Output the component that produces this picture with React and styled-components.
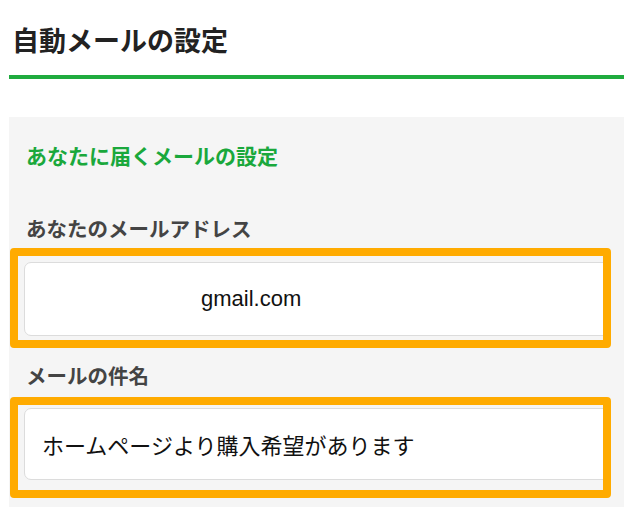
import React from "react";
import styled, { createGlobalStyle } from "styled-components";

const Global = createGlobalStyle`
  html, body { margin: 0; padding: 0; background: #ffffff; }
  body {
    font-family: "Liberation Sans", "Noto Sans CJK JP", sans-serif;
    color: #222;
  }
`;

const Page = styled.div`
  width: 615px;
  margin-left: 9px;
`;

const Header = styled.header`
  padding: 29px 0 19px 3px;
  border-bottom: 4px solid #1fab3e;
  margin-bottom: 38px;
`;

const Title = styled.h1`
  margin: 0;
  font-size: 27px;
  line-height: 27px;
  font-weight: 700;
  color: #222;
`;

const Panel = styled.section`
  background: #f5f5f5;
  padding: 29px 13px 9px 1px;
`;

const SubTitle = styled.h2`
  margin: 0 0 0 16px;
  font-size: 21px;
  line-height: 21px;
  font-weight: 700;
  color: #1aa83c;
`;

const Label = styled.div`
  margin: ${(p) => p.$top}px 0 ${(p) => p.$bottom}px 16px;
  font-size: 20.5px;
  line-height: 21px;
  font-weight: 700;
  color: #444;
`;

const Highlight = styled.div`
  border: 8px solid #ffab00;
  border-radius: 4px;
  padding: ${(p) => p.$pt}px 0 ${(p) => p.$pb}px 6px;
  overflow: hidden;
`;

const Field = styled.div`
  box-sizing: border-box;
  width: 620px;
  height: ${(p) => p.$h}px;
  background: #fff;
  border: 1px solid #dcdcdc;
  border-radius: 7px;
  display: flex;
  align-items: center;
  padding-left: 17px;
  font-size: 22px;
  color: #111;
  white-space: nowrap;
`;

const Masked = styled.span`
  display: inline-block;
  width: 159px;
`;

export default function App() {
  return (
    <>
      <Global />
      <Page>
        <Header>
          <Title>自動メールの設定</Title>
        </Header>
        <Panel>
          <SubTitle>あなたに届くメールの設定</SubTitle>
          <Label $top={52} $bottom={8}>あなたのメールアドレス</Label>
          <Highlight $pt={6} $pb={4}>
            <Field $h={74}>
              <Masked />
              gmail.com
            </Field>
          </Highlight>
          <Label $top={18} $bottom={10}>メールの件名</Label>
          <Highlight $pt={3} $pb={10}>
            <Field $h={72}>ホームページより購入希望があります</Field>
          </Highlight>
        </Panel>
      </Page>
    </>
  );
}
